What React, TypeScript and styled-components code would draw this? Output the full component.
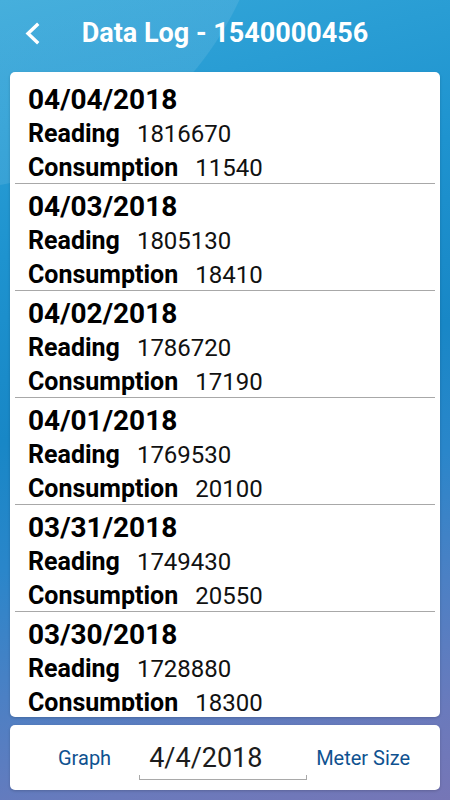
import React from "react";
import styled, { createGlobalStyle } from "styled-components";

const GlobalStyle = createGlobalStyle`
  html, body {
    margin: 0;
    padding: 0;
  }
  body {
    font-family: Roboto, "Noto Sans", "Liberation Sans", sans-serif;
    -webkit-font-smoothing: antialiased;
  }
  * { box-sizing: border-box; }
`;

const Page = styled.div`
  width: 450px;
  height: 800px;
  display: flex;
  flex-direction: column;
  padding: 0 10px 10px;
  overflow: hidden;
  background:
    radial-gradient(circle at -60px -140px, rgba(255, 255, 255, 0.09) 0 330px, transparent 331px),
    linear-gradient(165deg, #34a7d9 0%, #1e93cf 28%, #1887c6 48%, #2a86ca 62%, #4c80c4 76%, #6a7abc 90%, #7676b6 100%);
`;

const Header = styled.header`
  height: 72px;
  padding-bottom: 6px;
  display: grid;
  grid-template-columns: 1fr auto 1fr;
  align-items: center;
`;

const BackButton = styled.button`
  justify-self: start;
  margin-left: 13px;
  width: 18px;
  height: 24px;
  padding: 0;
  border: none;
  background: transparent;
  display: flex;
  align-items: center;
  justify-content: flex-start;
  cursor: pointer;
`;

const Title = styled.h1`
  margin: 0;
  color: #ffffff;
  font-family: Roboto, "Liberation Sans", sans-serif;
  font-weight: 700;
  font-size: 27px;
  line-height: 34px;
  white-space: nowrap;
`;

const LogCard = styled.section`
  flex: 1;
  min-height: 0;
  background: #ffffff;
  border-radius: 5px;
  padding: 5px 0 6px;
  box-shadow: 0 1px 3px rgba(0, 0, 0, 0.18);
  display: flex;
  flex-direction: column;
`;

const Scroll = styled.div`
  flex: 1;
  min-height: 0;
  overflow: hidden;
`;

const Entry = styled.div`
  margin: 0 5px;
  padding: 5px 13px 0;
  height: 107px;
  border-bottom: 1px solid #a8a8a8;
  color: #000000;
`;

const EntryDate = styled.div`
  font-size: 28px;
  font-weight: 700;
  line-height: 35px;
`;

const Field = styled.div`
  display: flex;
  align-items: baseline;
  line-height: 34px;
`;

const FieldLabel = styled.span`
  font-size: 25px;
  font-weight: 700;
`;

const FieldValue = styled.span`
  font-size: 24px;
  font-weight: 400;
  margin-left: 17px;
  color: #111111;
`;

const BottomBar = styled.footer`
  margin-top: 8px;
  height: 65px;
  background: #ffffff;
  border-radius: 5px;
  box-shadow: 0 1px 3px rgba(0, 0, 0, 0.18);
  display: flex;
  align-items: center;
  padding-left: 38px;
`;

const LinkButton = styled.button<{ $pad: number }>`
  border: none;
  background: transparent;
  padding: 0 ${(p) => p.$pad}px;
  font-family: Roboto, "Liberation Sans", sans-serif;
  font-size: 20px;
  line-height: 30px;
  color: #0f5290;
  cursor: pointer;
`;

const DateField = styled.div`
  position: relative;
  width: 168px;
  height: 46px;
  margin: 0 4px 0 18px;
  padding-top: 6px;
  padding-left: 10px;
  font-size: 27px;
  line-height: 34px;
  color: #1c1c1c;

  &::after {
    content: "";
    position: absolute;
    left: 0;
    right: 0;
    bottom: 1px;
    height: 4px;
    border: 1.5px solid #a9a9a9;
    border-top: none;
  }
`;

type Log = { date: string; reading: string; consumption: string };

const logs: Log[] = [
  { date: "04/04/2018", reading: "1816670", consumption: "11540" },
  { date: "04/03/2018", reading: "1805130", consumption: "18410" },
  { date: "04/02/2018", reading: "1786720", consumption: "17190" },
  { date: "04/01/2018", reading: "1769530", consumption: "20100" },
  { date: "03/31/2018", reading: "1749430", consumption: "20550" },
  { date: "03/30/2018", reading: "1728880", consumption: "18300" },
];

const ChevronLeft = () => (
  <svg width="18" height="24" viewBox="0 0 18 24" fill="none">
    <path
      d="M14 4 L5 12.5 L14 21"
      stroke="#ffffff"
      strokeWidth="3.4"
      strokeLinecap="square"
      strokeLinejoin="miter"
    />
  </svg>
);

export default function App() {
  return (
    <>
      <GlobalStyle />
      <Page>
        <Header>
          <BackButton aria-label="Back">
            <ChevronLeft />
          </BackButton>
          <Title>Data Log - 1540000456</Title>
          <span />
        </Header>
        <LogCard>
          <Scroll>
            {logs.map((l) => (
              <Entry key={l.date}>
                <EntryDate>{l.date}</EntryDate>
                <Field>
                  <FieldLabel>Reading</FieldLabel>
                  <FieldValue>{l.reading}</FieldValue>
                </Field>
                <Field>
                  <FieldLabel>Consumption</FieldLabel>
                  <FieldValue>{l.consumption}</FieldValue>
                </Field>
              </Entry>
            ))}
          </Scroll>
        </LogCard>
        <BottomBar>
          <LinkButton $pad={10}>Graph</LinkButton>
          <DateField>4/4/2018</DateField>
          <LinkButton $pad={5}>Meter Size</LinkButton>
        </BottomBar>
      </Page>
    </>
  );
}
